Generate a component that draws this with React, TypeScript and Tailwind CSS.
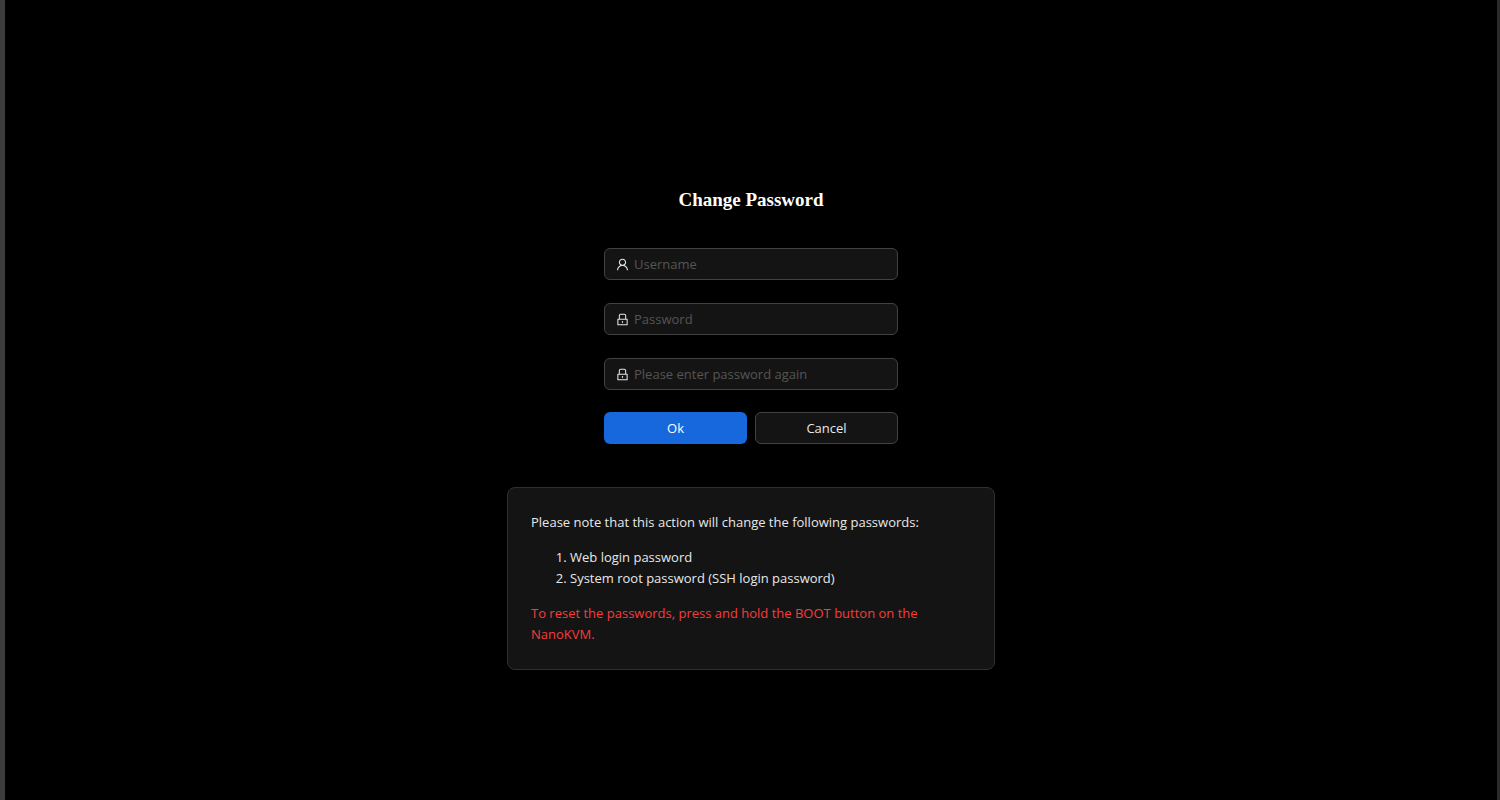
import { useId, useState } from 'react';
import type { FormEvent } from 'react';
import type { IconType } from 'react-icons';
import { AiOutlineLock, AiOutlineUser } from 'react-icons/ai';

type FieldProps = {
  icon: IconType;
  label: string;
  type: 'text' | 'password';
  value: string;
  onChange: (value: string) => void;
};

function Field({ icon: Icon, label, type, value, onChange }: FieldProps) {
  const id = useId();
  return (
    <div className="flex h-8 items-center gap-1 rounded-md border border-[#424242] bg-[#141414] px-2.5 focus-within:border-[#1668dc]">
      <label htmlFor={id} aria-label={label} className="shrink-0 text-[#e4e4e4]">
        <Icon size={15} aria-hidden="true" />
      </label>
      <input
        id={id}
        type={type}
        placeholder={label}
        value={value}
        onChange={(event) => onChange(event.target.value)}
        className="w-full min-w-0 bg-transparent text-[#dcdcdc] outline-none placeholder:text-[#555555]"
      />
    </div>
  );
}

export default function App() {
  const [username, setUsername] = useState('');
  const [password, setPassword] = useState('');
  const [again, setAgain] = useState('');

  const submit = (event: FormEvent) => event.preventDefault();

  return (
    <div className="flex min-h-screen flex-col items-center justify-center border-r-3 border-l-5 border-r-[#2b2b2b] border-l-[#3c3c3c] bg-black font-['Open_Sans','Noto_Sans',sans-serif] text-[13px] leading-[21px] text-[#e8e8e8]">
      <main className="flex w-full max-w-[488px] flex-col items-center pt-14">
        <h1 className="font-['Liberation_Serif',serif] text-[19px] leading-7 font-bold text-white">
          Change Password
        </h1>

        <form onSubmit={submit} className="mt-[34px] w-full max-w-[294px]">
          <div className="flex flex-col gap-[23px]">
            <Field icon={AiOutlineUser} label="Username" type="text" value={username} onChange={setUsername} />
            <Field icon={AiOutlineLock} label="Password" type="password" value={password} onChange={setPassword} />
            <Field
              icon={AiOutlineLock}
              label="Please enter password again"
              type="password"
              value={again}
              onChange={setAgain}
            />
          </div>
          <div className="mt-[22px] grid grid-cols-2 gap-2">
            <button type="submit" className="h-8 rounded-md bg-[#1668dc] text-white">
              Ok
            </button>
            <button type="button" className="h-8 rounded-md border border-[#424242] bg-[#141414]">
              Cancel
            </button>
          </div>
        </form>

        <section className="mt-[43px] flex w-full flex-col gap-3.5 rounded-lg border border-[#303030] bg-[#141414] px-[23px] py-6">
          <p>Please note that this action will change the following passwords:</p>
          <ol className="list-decimal pl-[39px]">
            <li>Web login password</li>
            <li>System root password (SSH login password)</li>
          </ol>
          <p className="text-[#f83c3c]">
            To reset the passwords, press and hold the BOOT button on the NanoKVM.
          </p>
        </section>
      </main>
    </div>
  );
}
